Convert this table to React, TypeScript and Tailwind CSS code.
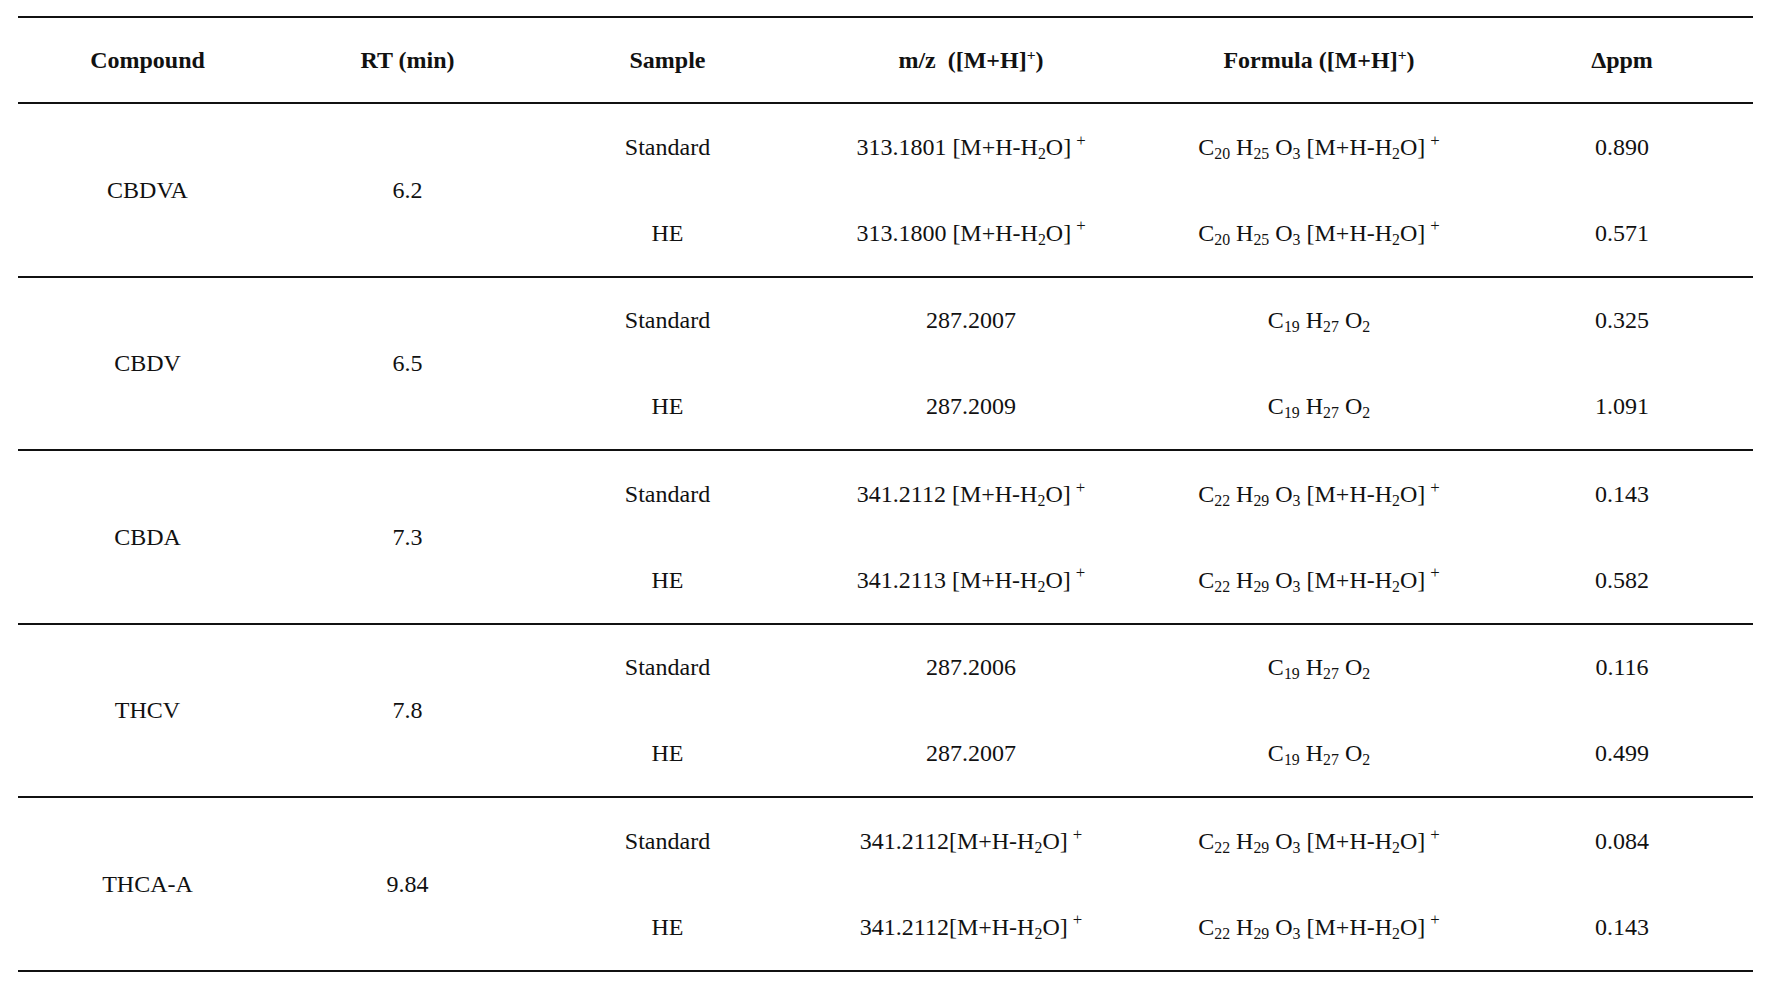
const rows = [
  {
    name: "CBDVA",
    rt: "6.2",
    items: [
      { sample: "Standard", mz: "313.1801 ", water: true, c: "20", h: "25", o: "3", ppm: "0.890" },
      { sample: "HE", mz: "313.1800 ", water: true, c: "20", h: "25", o: "3", ppm: "0.571" },
    ],
  },
  {
    name: "CBDV",
    rt: "6.5",
    items: [
      { sample: "Standard", mz: "287.2007", water: false, c: "19", h: "27", o: "2", ppm: "0.325" },
      { sample: "HE", mz: "287.2009", water: false, c: "19", h: "27", o: "2", ppm: "1.091" },
    ],
  },
  {
    name: "CBDA",
    rt: "7.3",
    items: [
      { sample: "Standard", mz: "341.2112 ", water: true, c: "22", h: "29", o: "3", ppm: "0.143" },
      { sample: "HE", mz: "341.2113 ", water: true, c: "22", h: "29", o: "3", ppm: "0.582" },
    ],
  },
  {
    name: "THCV",
    rt: "7.8",
    items: [
      { sample: "Standard", mz: "287.2006", water: false, c: "19", h: "27", o: "2", ppm: "0.116" },
      { sample: "HE", mz: "287.2007", water: false, c: "19", h: "27", o: "2", ppm: "0.499" },
    ],
  },
  {
    name: "THCA-A",
    rt: "9.84",
    items: [
      { sample: "Standard", mz: "341.2112", water: true, c: "22", h: "29", o: "3", ppm: "0.084" },
      { sample: "HE", mz: "341.2112", water: true, c: "22", h: "29", o: "3", ppm: "0.143" },
    ],
  },
];

function Sub({ children }: { children: React.ReactNode }) {
  return <sub className="text-[0.66em]">{children}</sub>;
}

function Adduct() {
  return (
    <span>
      [M+H-H<Sub>2</Sub>O]<sup className="ml-[5px] text-[0.7em] -top-[0.55em]">+</sup>
    </span>
  );
}

const cols = "grid grid-cols-[259px_261px_259px_348px_348px_258px]";

export default function App() {
  return (
    <div className="min-h-screen bg-white pt-[16px] pl-[18px] text-[#111] font-['Liberation_Serif','Times_New_Roman',serif] text-[24px]">
      <div className="w-[1735px] border-t-2 border-[#111]">
        <div className={`${cols} h-[86px] items-center text-center font-bold border-b-2 border-[#111]`}>
          <div>Compound</div>
          <div>RT (min)</div>
          <div>Sample</div>
          <div className="whitespace-pre">
            m/z  ([M+H]<sup className="text-[0.65em]">+</sup>)
          </div>
          <div>
            Formula ([M+H]<sup className="text-[0.65em]">+</sup>)
          </div>
          <div>Δppm</div>
        </div>

        {rows.map((r) => (
          <div key={r.name} className={`${cols} h-[173.5px] border-b-2 border-[#111] text-center`}>
            <div className="flex items-center justify-center">{r.name}</div>
            <div className="flex items-center justify-center">{r.rt}</div>
            <div className="col-span-4 grid grid-rows-2">
              {r.items.map((it) => (
                <div key={it.sample} className="grid grid-cols-[259px_348px_348px_258px] items-center">
                  <div>{it.sample}</div>
                  <div>
                    {it.mz}
                    {it.water && <Adduct />}
                  </div>
                  <div>
                    C<Sub>{it.c}</Sub> H<Sub>{it.h}</Sub> O<Sub>{it.o}</Sub>
                    {it.water && (
                      <>
                        {" "}
                        <Adduct />
                      </>
                    )}
                  </div>
                  <div>{it.ppm}</div>
                </div>
              ))}
            </div>
          </div>
        ))}
      </div>
    </div>
  );
}
